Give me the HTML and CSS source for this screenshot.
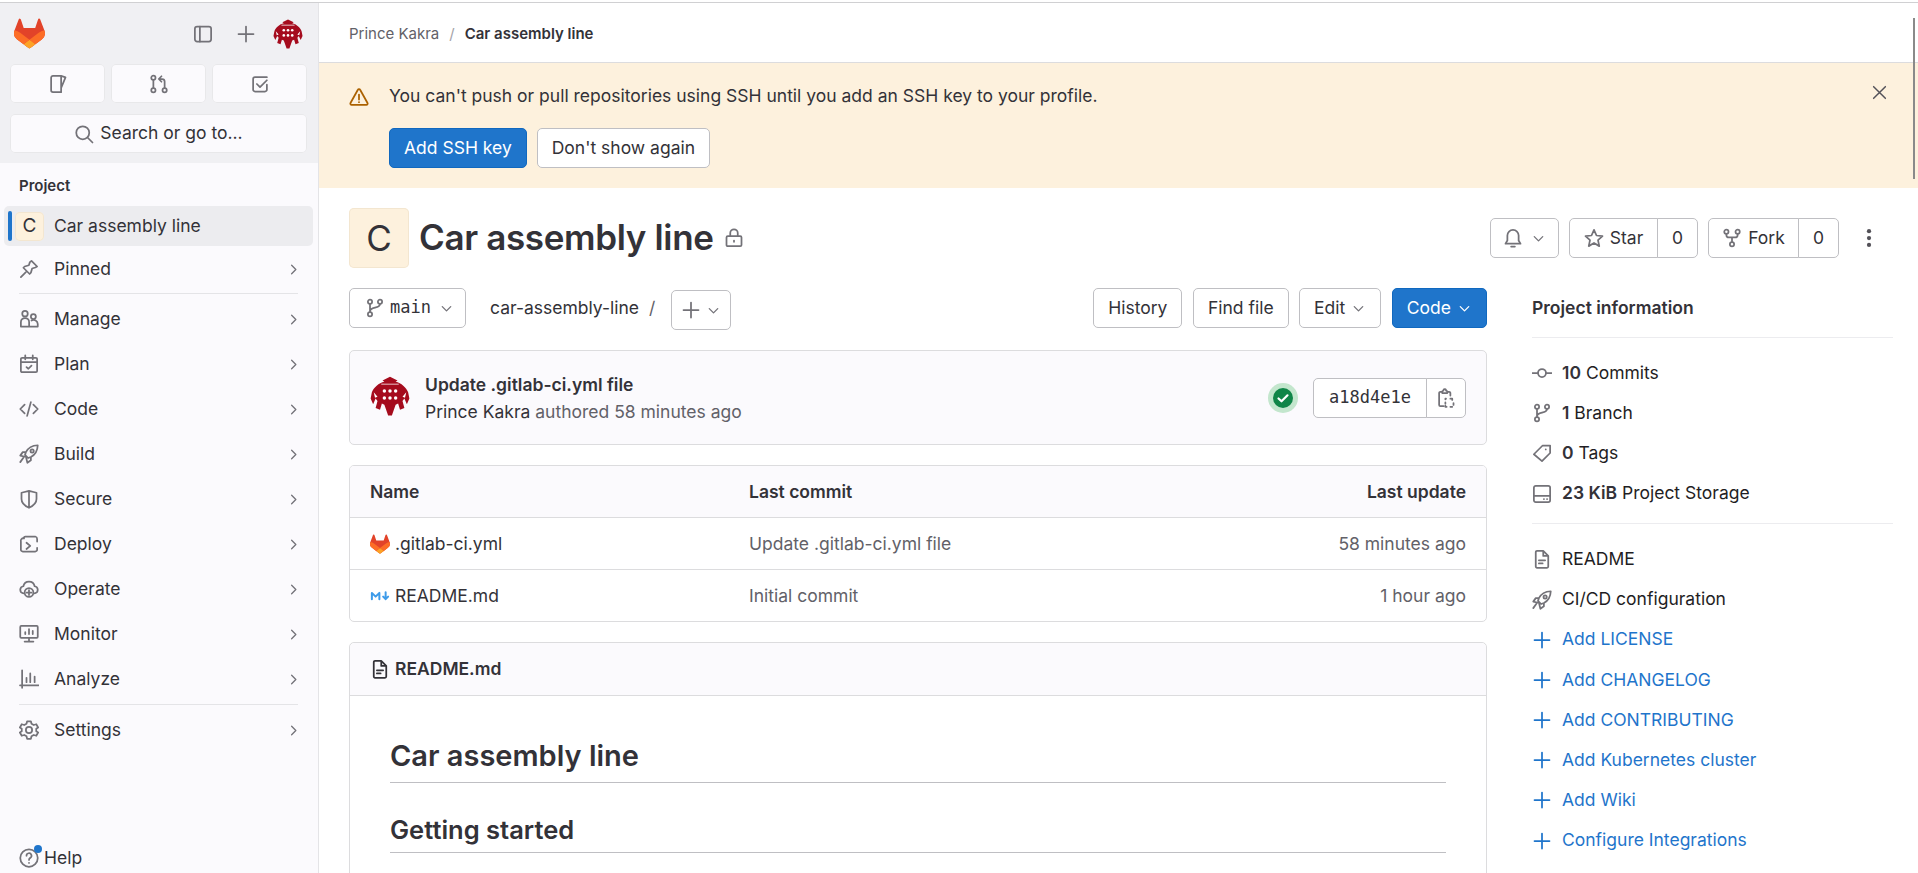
FILE: index.html
```html
<!DOCTYPE html>
<html lang="en">

<head>
    <meta charset="UTF-8">
    <meta name="viewport" content="width=device-width, initial-scale=1.0">
    <title>Car assembly line</title>
    <link rel="stylesheet" href="styles.css">
</head>

<body>
    <!-- icon sprite -->
    <svg class="sprite" xmlns="http://www.w3.org/2000/svg">
        <symbol id="i-tanuki" viewBox="0 0 25 24">
            <path fill="#E24329" stroke="none" d="m24.507 9.5-.034-.09L21.082.562a.896.896 0 0 0-1.694.091l-2.29 7.01H7.825L5.535.653a.898.898 0 0 0-1.694-.09L.451 9.411.416 9.5a6.297 6.297 0 0 0 2.09 7.278l.012.01.03.022 5.16 3.867 2.56 1.935 1.554 1.176a1.051 1.051 0 0 0 1.268 0l1.555-1.176 2.56-1.935 5.197-3.89.014-.01A6.297 6.297 0 0 0 24.507 9.5Z" />
            <path fill="#FC6D26" stroke="none" d="m24.507 9.5-.034-.09a11.44 11.44 0 0 0-4.56 2.051l-7.447 5.632 4.742 3.584 5.197-3.89.014-.01A6.297 6.297 0 0 0 24.507 9.5Z" />
            <path fill="#FCA326" stroke="none" d="m7.707 20.677 2.56 1.935 1.555 1.176a1.051 1.051 0 0 0 1.268 0l1.555-1.176 2.56-1.935-4.743-3.584-4.755 3.584Z" />
            <path fill="#FC6D26" stroke="none" d="M5.01 11.461a11.43 11.43 0 0 0-4.56-2.05L.416 9.5a6.297 6.297 0 0 0 2.09 7.278l.012.01.03.022 5.16 3.867 4.745-3.584-7.444-5.632Z" />
        </symbol>
        <symbol id="i-spider" viewBox="0 0 32 32">
            <path fill="#a50b1d" stroke="none" d="M16 .5 22 3.500 20.500 4.500C25 5.500 29 9 30.500 13L31.500 18 29.500 22.500 27.500 18 26 20 27.500 25.500 24 27 22.500 22 20.500 23 17.500 31.500H14.500L11.500 23 9.500 22 8 27 4.500 25.500 6 20 4.500 18 2.500 22.500.5 18 1.500 13C3 9 7 5.500 11.500 4.500L10 3.500Z" />
            <g fill="#fff" stroke="none">
                <circle cx="11.500" cy="12" r="1.400" />
                <circle cx="20.500" cy="12" r="1.400" />
                <circle cx="16" cy="12" r="1.400" />
                <circle cx="11.500" cy="17.500" r="1.400" />
                <circle cx="20.500" cy="17.500" r="1.400" />
                <circle cx="16" cy="17.500" r="1.400" />
                <path d="M9 6.200h14v.6H9zM3 13l3 3.500-2 .8zM29 13l-3 3.500 2 .8z" />
            </g>
        </symbol>
        <symbol id="i-sidebar" viewBox="0 0 16 16"><rect x="1.500" y="2" width="13" height="12" rx="1.800" /><path d="M5.500 2v12" /></symbol>
        <symbol id="i-plus" viewBox="0 0 16 16"><path d="M8 2v12M2 8h12" /></symbol>
        <symbol id="i-issues" viewBox="0 0 16 16"><path d="M2.500 3a1.500 1.500 0 0 1 1.500-1.500h6.500v13H4a1.500 1.500 0 0 1-1.500-1.500zM10.500 1.500l3.500 1.200-3.500 8.500" /></symbol>
        <symbol id="i-mr" viewBox="0 0 16 16"><circle cx="3.500" cy="3" r="1.700" /><circle cx="3.500" cy="13" r="1.700" /><circle cx="12.500" cy="13" r="1.700" /><path d="M3.500 4.700v6.600M12.500 11.300V6a2 2 0 0 0-2-2H8M10 1.800 7.800 4 10 6.200" /></symbol>
        <symbol id="i-todo" viewBox="0 0 16 16"><path d="M13.500 8.500v4a1.500 1.500 0 0 1-1.500 1.500H4a1.500 1.500 0 0 1-1.500-1.500v-8.500A1.500 1.500 0 0 1 4 2.500h9.500M5.500 8l2.500 2.500 5.500-5.500" /></symbol>
        <symbol id="i-search" viewBox="0 0 16 16"><circle cx="7" cy="7" r="5.200" /><path d="m11 11 3.800 3.800" /></symbol>
        <symbol id="i-pin" viewBox="0 0 16 16"><path d="M10 1.500 14.500 6 13 6.800l-2.500.8-1 3.400-1 1-5-5 1-1 3.400-1 .8-2.500zM5.500 10.500 1.500 14.500" /></symbol>
        <symbol id="i-users" viewBox="0 0 16 16"><circle cx="4.800" cy="3.700" r="2.200" /><circle cx="11.500" cy="6" r="2" /><path d="M1.500 14v-3.500a3.300 3.300 0 0 1 6.600 0V14zM8.200 14H15v-2a3.300 3.300 0 0 0-5-2.800" /></symbol>
        <symbol id="i-plan" viewBox="0 0 16 16"><rect x="1.500" y="3" width="13" height="11.500" rx="1" /><path d="M1.500 6.500h13M5 1v3.200M11 1v3.200M6 10.500l1.500 1.300 2.500-2.500" /></symbol>
        <symbol id="i-code" viewBox="0 0 16 16"><path d="M4.500 4.500 1 8l3.500 3.500M11.500 4.500 15 8l-3.500 3.500M9.500 2.500l-3 11" /></symbol>
        <symbol id="i-rocket" viewBox="0 0 16 16"><path d="M15 1c-4.500.2-7.500 1.700-9.500 5.500L4.800 8.700l2.500 2.500 2.200-.8C13.300 8.500 14.800 5.500 15 1zM5.500 6.500H3L1 9.300l3.800.9M9.500 10.500V13l-2.800 2-.9-3.800M3.500 11 1 14.500" /><circle cx="10.500" cy="5.500" r="1.300" /></symbol>
        <symbol id="i-shield" viewBox="0 0 16 16"><path d="M2 3l6-1.500L14 3v5c0 3-2.500 5.500-6 7-3.500-1.500-6-4-6-7zM8 1.500V15" /></symbol>
        <symbol id="i-deploy" viewBox="0 0 16 16"><path d="M4 3.500V3a1 1 0 0 1 1-1h8a2 2 0 0 1 1.500 2v2M1.500 6v6.500a1.500 1.500 0 0 0 1.500 1.500h10a1.500 1.500 0 0 0 1.500-1.500V11M1.500 6a2 2 0 0 1 2.500-2.500M6 7l3 2.500L6 12" /></symbol>
        <symbol id="i-operate" viewBox="0 0 16 16"><path d="M3.500 11.500a3 3 0 0 1-2.500-3 3 3 0 0 1 2.500-2.700 4.600 4.600 0 0 1 9 0A3 3 0 0 1 15 8.500a3 3 0 0 1-2.500 3" /><circle cx="8" cy="10.800" r="3.500" /><path d="M8 8.800v4M6 10.800h4" /></symbol>
        <symbol id="i-monitor" viewBox="0 0 16 16"><rect x="1" y="1.500" width="14" height="9.500" rx=".8" /><path d="M4.500 14h7M8 11v3M5 8V6.500M8 8V4M11 8V5.500" /></symbol>
        <symbol id="i-analyze" viewBox="0 0 16 16"><path d="M2.500 1v14M.8 13h14.700M6 10.500V7M9 10.500V3.500M12.500 10.500V6" /></symbol>
        <symbol id="i-gear" viewBox="0 0 16 16"><path d="M6.500 1h3l.5 2 1.800 1 2-.6 1.500 2.600-1.500 1v2l1.500 1-1.500 2.600-2-.6-1.800 1-.5 2h-3l-.5-2-1.800-1-2 .6L.7 10l1.500-1V7L.7 6l1.500-2.600 2 .6 1.800-1z" /><circle cx="8" cy="8" r="2.500" /></symbol>
        <symbol id="i-help" viewBox="0 0 16 16"><circle cx="8" cy="8" r="7" /><path d="M6 6.200a2 2 0 1 1 3 1.700c-.7.400-1 .9-1 1.600M8 11.800v.1" /></symbol>
        <symbol id="i-right" viewBox="0 0 16 16"><path d="M6 3.500 10.500 8 6 12.500" /></symbol>
        <symbol id="i-down" viewBox="0 0 16 16"><path d="M3.500 6 8 10.500 12.500 6" /></symbol>
        <symbol id="i-warning" viewBox="0 0 16 16"><path d="M7.100 2.200a1 1 0 0 1 1.800 0l5.900 10.600a1 1 0 0 1-.9 1.500H2.100a1 1 0 0 1-.9-1.500zM8 6v4M8 12v.1" /></symbol>
        <symbol id="i-close" viewBox="0 0 16 16"><path d="m2.500 2.500 11 11M13.500 2.500l-11 11" /></symbol>
        <symbol id="i-lock" viewBox="0 0 16 16"><rect x="2" y="6.500" width="12" height="8" rx="1" /><path d="M5 6.500V4a3 3 0 0 1 6 0v2.500M8 10v1" /></symbol>
        <symbol id="i-branch" viewBox="0 0 16 16"><circle cx="4" cy="3" r="1.700" /><circle cx="4" cy="13" r="1.700" /><circle cx="12" cy="3" r="1.700" /><path d="M4 4.700v6.600M12 4.700c0 4-8 2-8 6" /></symbol>
        <symbol id="i-bell" viewBox="0 0 16 16"><path d="M8 1.500A4.500 4.500 0 0 0 3.500 6v4L2 12.500h12L12.500 10V6A4.500 4.500 0 0 0 8 1.500zM6.500 14.800h3" /></symbol>
        <symbol id="i-star" viewBox="0 0 16 16"><path d="M8 1.500 10 6l4.800.5-3.600 3.200 1 4.800L8 12l-4.200 2.500 1-4.800L1.200 6.500 6 6z" /></symbol>
        <symbol id="i-fork" viewBox="0 0 16 16"><circle cx="3.500" cy="3" r="1.700" /><circle cx="12.500" cy="3" r="1.700" /><circle cx="8" cy="13" r="1.700" /><path d="M3.500 4.700v.8a2 2 0 0 0 2 2h5a2 2 0 0 0 2-2v-.8M8 7.500v3.800" /></symbol>
        <symbol id="i-kebab" viewBox="0 0 16 16"><g fill="currentColor" stroke="none"><circle cx="8" cy="2.500" r="1.700" /><circle cx="8" cy="8" r="1.700" /><circle cx="8" cy="13.500" r="1.700" /></g></symbol>
        <symbol id="i-copy" viewBox="0 0 16 16"><path d="M5 3H3.500A1 1 0 0 0 2.500 4v9.500a1 1 0 0 0 1 1H6M11.500 6V4a1 1 0 0 0-1-1H9M5 3a1 1 0 0 1 1-1V1.500a1 1 0 0 1 1-.5 1 1 0 0 1 1 .5V2a1 1 0 0 1 1 1v1H5zM8 8.500H7.500v.5M11.500 8.500h1.500v1M14 12v1.500M13 15h-1.500M8.500 15h-1v-1M7.500 11.500v1" /></symbol>
        <symbol id="i-commit" viewBox="0 0 16 16"><circle cx="8" cy="8" r="3.200" /><path d="M.5 8h4.300M11.200 8h4.300" /></symbol>
        <symbol id="i-tag" viewBox="0 0 16 16"><path d="M14.500 2v6L8 14.500 1.500 9 8.500 2zM11 5v.1" /></symbol>
        <symbol id="i-storage" viewBox="0 0 16 16"><rect x="1.500" y="1.500" width="13" height="13" rx="1.500" /><path d="M1.500 9.500h13M9.500 12h.1M12 12h.1" /></symbol>
        <symbol id="i-doc" viewBox="0 0 16 16"><path d="M3 2.500a1 1 0 0 1 1-1h5l4 4v8.500a1 1 0 0 1-1 1H4a1 1 0 0 1-1-1zM9 1.500v4h4M5.500 9h5M5.500 11.500h3" /></symbol>
        <symbol id="i-md" viewBox="0 0 16 16"><path stroke="#3d9be9" stroke-width="1.600" d="M1.500 10.500V5.500L4.500 8.500l3-3V10.500M12.500 5v5.500M10.500 8.500l2 2 2-2" /></symbol>
    </svg>

    <div class="topline"></div>
    <div class="thumb"></div>

    <div class="layout">
        <aside class="sidebar">
            <div class="side-top">
                <div class="side-head">
                    <svg class="logo"><use href="#i-tanuki" /></svg>
                    <div class="side-tools">
                        <svg class="ic ic-20"><use href="#i-sidebar" /></svg>
                        <svg class="ic ic-20"><use href="#i-plus" /></svg>
                        <svg class="avatar-sm"><use href="#i-spider" /></svg>
                    </div>
                </div>
                <div class="side-counts">
                    <a class="count-btn"><svg class="ic ic-20"><use href="#i-issues" /></svg></a>
                    <a class="count-btn"><svg class="ic ic-20"><use href="#i-mr" /></svg></a>
                    <a class="count-btn"><svg class="ic ic-20"><use href="#i-todo" /></svg></a>
                </div>
                <a class="search-btn"><svg class="ic ic-20"><use href="#i-search" /></svg>Search or go to...</a>
            </div>

            <div class="side-nav">
                <div class="side-label">Project</div>
                <a class="nav-item active"><span class="tile">C</span>Car assembly line</a>
                <a class="nav-item pinned"><svg class="ic ic-20"><use href="#i-pin" /></svg>Pinned<svg class="ic chev"><use href="#i-right" /></svg></a>
                <hr class="side-rule">
                <div class="nav-group">
                    <a class="nav-item"><svg class="ic ic-20"><use href="#i-users" /></svg>Manage<svg class="ic chev"><use href="#i-right" /></svg></a>
                    <a class="nav-item"><svg class="ic ic-20"><use href="#i-plan" /></svg>Plan<svg class="ic chev"><use href="#i-right" /></svg></a>
                    <a class="nav-item"><svg class="ic ic-20"><use href="#i-code" /></svg>Code<svg class="ic chev"><use href="#i-right" /></svg></a>
                    <a class="nav-item"><svg class="ic ic-20"><use href="#i-rocket" /></svg>Build<svg class="ic chev"><use href="#i-right" /></svg></a>
                    <a class="nav-item"><svg class="ic ic-20"><use href="#i-shield" /></svg>Secure<svg class="ic chev"><use href="#i-right" /></svg></a>
                    <a class="nav-item"><svg class="ic ic-20"><use href="#i-deploy" /></svg>Deploy<svg class="ic chev"><use href="#i-right" /></svg></a>
                    <a class="nav-item"><svg class="ic ic-20"><use href="#i-operate" /></svg>Operate<svg class="ic chev"><use href="#i-right" /></svg></a>
                    <a class="nav-item"><svg class="ic ic-20"><use href="#i-monitor" /></svg>Monitor<svg class="ic chev"><use href="#i-right" /></svg></a>
                    <a class="nav-item"><svg class="ic ic-20"><use href="#i-analyze" /></svg>Analyze<svg class="ic chev"><use href="#i-right" /></svg></a>
                </div>
                <hr class="side-rule settings-rule">
                <a class="nav-item"><svg class="ic ic-20"><use href="#i-gear" /></svg>Settings<svg class="ic chev"><use href="#i-right" /></svg></a>
                <a class="help"><span class="help-icon"><svg class="ic ic-20"><use href="#i-help" /></svg><i class="help-dot"></i></span>Help</a>
            </div>
        </aside>

        <main class="main">
            <nav class="crumbs">
                <a>Prince Kakra</a><span class="crumb-sep">/</span><b>Car assembly line</b>
            </nav>

            <section class="banner">
                <svg class="ic banner-icon"><use href="#i-warning" /></svg>
                <div class="banner-body">
                    <p>You can't push or pull repositories using SSH until you add an SSH key to your profile.</p>
                    <div class="banner-actions">
                        <button class="btn btn-primary">Add SSH key</button>
                        <button class="btn">Don't show again</button>
                    </div>
                </div>
                <svg class="ic banner-close"><use href="#i-close" /></svg>
            </section>

            <div class="content">
                <header class="project-head">
                    <div class="project-title">
                        <span class="project-tile">C</span>
                        <h1>Car assembly line</h1>
                        <svg class="ic lock"><use href="#i-lock" /></svg>
                    </div>
                    <div class="project-actions">
                        <button class="btn btn-bell"><svg class="ic ic-20"><use href="#i-bell" /></svg><svg class="ic ic-sm"><use href="#i-down" /></svg></button>
                        <div class="btn-group star-group">
                            <button class="btn"><svg class="ic ic-20"><use href="#i-star" /></svg>Star</button>
                            <button class="btn btn-count">0</button>
                        </div>
                        <div class="btn-group fork-group">
                            <button class="btn"><svg class="ic ic-20"><use href="#i-fork" /></svg>Fork</button>
                            <button class="btn btn-count">0</button>
                        </div>
                        <span class="kebab"><svg class="ic ic-20"><use href="#i-kebab" /></svg></span>
                    </div>
                </header>

                <div class="columns">
                    <div class="col-main">
                        <div class="tree-bar">
                            <button class="btn btn-branch"><svg class="ic ic-20"><use href="#i-branch" /></svg><span class="mono">main</span><svg class="ic ic-sm"><use href="#i-down" /></svg></button>
                            <span class="tree-path">car-assembly-line</span>
                            <span class="tree-sep">/</span>
                            <button class="btn btn-add"><svg class="ic ic-20"><use href="#i-plus" /></svg><svg class="ic ic-sm"><use href="#i-down" /></svg></button>
                            <div class="tree-actions">
                                <button class="btn">History</button>
                                <button class="btn">Find file</button>
                                <button class="btn">Edit<svg class="ic ic-sm"><use href="#i-down" /></svg></button>
                                <button class="btn btn-primary">Code<svg class="ic ic-sm"><use href="#i-down" /></svg></button>
                            </div>
                        </div>

                        <div class="commit-box">
                            <svg class="avatar-md"><use href="#i-spider" /></svg>
                            <div class="commit-text">
                                <a class="commit-title">Update .gitlab-ci.yml file</a>
                                <div class="commit-meta"><a>Prince Kakra</a> authored 58 minutes ago</div>
                            </div>
                            <span class="status">
                                <svg viewBox="0 0 20 20" class="status-icon"><circle cx="10" cy="10" r="10" fill="#108548" /><path d="m5.500 10.500 3 2.800 6-6" fill="none" stroke="#fff" stroke-width="2.200" stroke-linecap="round" stroke-linejoin="round" /></svg>
                            </span>
                            <div class="btn-group sha-group">
                                <button class="btn mono">a18d4e1e</button>
                                <button class="btn btn-copy"><svg class="ic ic-20"><use href="#i-copy" /></svg></button>
                            </div>
                        </div>

                        <div class="file-box">
                            <table class="file-table">
                                <thead>
                                    <tr>
                                        <th class="col-name">Name</th>
                                        <th>Last commit</th>
                                        <th class="col-date">Last update</th>
                                    </tr>
                                </thead>
                                <tbody>
                                    <tr>
                                        <td class="col-name"><span class="file-name"><svg class="file-icon"><use href="#i-tanuki" /></svg>.gitlab-ci.yml</span></td>
                                        <td class="muted">Update .gitlab-ci.yml file</td>
                                        <td class="col-date muted">58 minutes ago</td>
                                    </tr>
                                    <tr>
                                        <td class="col-name"><span class="file-name"><svg class="ic file-icon"><use href="#i-md" /></svg>README.md</span></td>
                                        <td class="muted">Initial commit</td>
                                        <td class="col-date muted">1 hour ago</td>
                                    </tr>
                                </tbody>
                            </table>
                        </div>

                        <article class="readme">
                            <div class="readme-head"><svg class="ic ic-20"><use href="#i-doc" /></svg>README.md</div>
                            <div class="readme-body">
                                <h1>Car assembly line</h1>
                                <h2>Getting started</h2>
                            </div>
                        </article>
                    </div>

                    <aside class="col-info">
                        <h3>Project information</h3>
                        <ul class="info-list">
                            <li><svg class="ic ic-20"><use href="#i-commit" /></svg><span><b>10</b> Commits</span></li>
                            <li><svg class="ic ic-20"><use href="#i-branch" /></svg><span><b>1</b> Branch</span></li>
                            <li><svg class="ic ic-20"><use href="#i-tag" /></svg><span><b>0</b> Tags</span></li>
                            <li><svg class="ic ic-20"><use href="#i-storage" /></svg><span><b>23 KiB</b> Project Storage</span></li>
                        </ul>
                        <ul class="info-list second">
                            <li><svg class="ic ic-20"><use href="#i-doc" /></svg><span>README</span></li>
                            <li><svg class="ic ic-20"><use href="#i-rocket" /></svg><span>CI/CD configuration</span></li>
                            <li class="add"><svg class="ic ic-20"><use href="#i-plus" /></svg><span>Add LICENSE</span></li>
                            <li class="add"><svg class="ic ic-20"><use href="#i-plus" /></svg><span>Add CHANGELOG</span></li>
                            <li class="add"><svg class="ic ic-20"><use href="#i-plus" /></svg><span>Add CONTRIBUTING</span></li>
                            <li class="add"><svg class="ic ic-20"><use href="#i-plus" /></svg><span>Add Kubernetes cluster</span></li>
                            <li class="add"><svg class="ic ic-20"><use href="#i-plus" /></svg><span>Add Wiki</span></li>
                            <li class="add"><svg class="ic ic-20"><use href="#i-plus" /></svg><span>Configure Integrations</span></li>
                        </ul>
                    </aside>
                </div>
            </div>
        </main>
    </div>
</body>

</html>
```
FILE: styles.css
```css
:root {
    --text: #333238;
    --muted: #626168;
    --icon: #737278;
    --line: #dcdcde;
    --btn-line: #bfbfc3;
    --blue: #1f75cb;
    --panel: #fbfafd;
}

* {
    box-sizing: border-box;
}

html,
body {
    height: 873px;
    overflow: hidden;
}

body {
    margin: 0;
    background: #fff;
    color: var(--text);
    font-family: Inter, "Noto Sans", sans-serif;
    font-size: 17.5px;
    line-height: 1.4;
}

.sprite {
    display: none;
}

.topline {
    height: 3px;
    border-bottom: 1px solid #d0d0d2;
}

.thumb {
    position: absolute;
    top: 18px;
    left: 1913px;
    width: 2px;
    height: 161px;
    background: #8a8a8a;
}

.layout {
    display: flex;
    height: 870px;
}

/* icons */
.ic {
    fill: none;
    stroke: currentColor;
    stroke-width: 1.4;
    stroke-linecap: round;
    stroke-linejoin: round;
    color: var(--icon);
    flex: none;
}

.ic-20 {
    width: 20px;
    height: 20px;
}

.ic-sm {
    width: 15px;
    height: 15px;
}

/* sidebar */
.sidebar {
    width: 319px;
    flex: none;
    display: flex;
    flex-direction: column;
    border-right: 1px solid #e4e4e7;
    background: var(--panel);
}

.side-top {
    height: 160px;
    padding: 15px 11px 0 10px;
    background: #f0f0f3;
}

.side-head {
    display: flex;
    align-items: center;
    justify-content: space-between;
    height: 31px;
    padding-left: 4px;
}

.logo {
    width: 31px;
    height: 31px;
}

.side-tools {
    display: flex;
    align-items: center;
    gap: 23px;
    padding-right: 4px;
}

.avatar-sm {
    width: 30px;
    height: 30px;
    margin-left: -6px;
}

.side-counts {
    display: flex;
    gap: 6px;
    margin-top: 15px;
}

.count-btn {
    flex: 1;
    height: 39px;
    display: flex;
    align-items: center;
    justify-content: center;
    border-radius: 5px;
    background: var(--panel);
    box-shadow: 0 0 0 1px #e8e8ea inset;
}

.search-btn {
    height: 39px;
    margin-top: 11px;
    display: flex;
    align-items: center;
    justify-content: center;
    gap: 6px;
    border-radius: 5px;
    background: var(--panel);
    box-shadow: 0 0 0 1px #e8e8ea inset;
}

.side-nav {
    flex: 1;
    display: flex;
    flex-direction: column;
    padding: 0 5px 0 4px;
}

.side-label {
    height: 43px;
    padding: 12px 0 0 15px;
    font-size: 15px;
    font-weight: 600;
}

.nav-item {
    height: 40px;
    display: flex;
    align-items: center;
    gap: 15px;
    padding-left: 15px;
    padding-right: 12px;
    border-radius: 5px;
}

.nav-item .chev {
    margin-left: auto;
    width: 15px;
    height: 15px;
}

.nav-item.active {
    position: relative;
    background: #ececef;
    padding-left: 11px;
    gap: 10px;
}

.nav-item.active::before {
    content: "";
    position: absolute;
    left: 4px;
    top: 5px;
    bottom: 5px;
    width: 4px;
    border-radius: 2px;
    background: var(--blue);
}

.nav-item.pinned {
    margin-top: 3px;
}

.tile {
    width: 29px;
    height: 29px;
    display: flex;
    align-items: center;
    justify-content: center;
    border-radius: 5px;
    background: #fdf1dd;
    box-shadow: 0 0 0 1px #f3e6d0 inset;
    font-size: 19px;
}

.side-rule {
    width: 279px;
    margin: 4px 0 5px 15px;
    border: 0;
    border-top: 1px solid #e4e4e7;
}

.settings-rule {
    margin-top: 5px;
}

.nav-group {
    display: flex;
    flex-direction: column;
    gap: 5px;
}

.help {
    margin-top: auto;
    margin-bottom: 3px;
    padding-left: 15px;
    display: flex;
    align-items: center;
    gap: 5px;
}

.help-icon {
    position: relative;
    display: flex;
}

.help-dot {
    position: absolute;
    top: -3px;
    right: -3px;
    width: 8px;
    height: 8px;
    border-radius: 50%;
    background: var(--blue);
}

/* main */
.main {
    flex: 1;
    min-width: 0;
}

.crumbs {
    height: 60px;
    display: flex;
    align-items: center;
    padding: 1px 0 0 30px;
    border-bottom: 1px solid var(--line);
    font-size: 15px;
    color: var(--muted);
}

.crumbs b {
    font-weight: 600;
    color: var(--text);
}

.crumb-sep {
    margin: 0 10px;
    color: #a4a3a8;
}

.banner {
    height: 125px;
    display: flex;
    padding: 23px 30px;
    background: #fdf1dd;
}

.banner-icon {
    width: 20px;
    height: 20px;
    margin-top: 1px;
    color: #ab6100;
}

.banner-body {
    margin-left: 20px;
    flex: 1;
}

.banner-body p {
    margin: 0;
    line-height: 19px;
}

.banner-actions {
    display: flex;
    gap: 10px;
    margin-top: 23px;
}

.banner-close {
    width: 17px;
    height: 17px;
    margin-top: -2px;
    color: #535158;
}

.btn {
    height: 40px;
    display: inline-flex;
    align-items: center;
    justify-content: center;
    gap: 6px;
    padding: 0 14px;
    border: 1px solid var(--btn-line);
    border-radius: 5px;
    background: #fff;
    color: var(--text);
    font: inherit;
    white-space: nowrap;
}

.btn-primary {
    border-color: #1068bf;
    background: var(--blue);
    color: #fff;
}

.btn-primary .ic {
    color: #fff;
}

.mono {
    font-family: "DejaVu Sans Mono", "Liberation Mono", monospace;
    font-size: 17px;
}

.content {
    padding: 20px 25px 0 30px;
}

.project-head {
    display: flex;
    align-items: center;
    justify-content: space-between;
    height: 60px;
}

.project-title {
    display: flex;
    align-items: center;
}

.project-tile {
    width: 60px;
    height: 60px;
    display: flex;
    align-items: center;
    justify-content: center;
    border-radius: 5px;
    background: #fdf1dd;
    box-shadow: 0 0 0 1px #f3e6d0 inset;
    font-size: 35px;
}

.project-title h1 {
    margin: 0 0 0 10px;
    font-size: 35px;
    font-weight: 600;
    letter-spacing: -0.01em;
    line-height: 1.25;
}

.lock {
    width: 20px;
    height: 20px;
    margin-left: 10px;
}

.project-actions {
    display: flex;
    align-items: center;
    gap: 10px;
}

.btn-bell {
    width: 69px;
    padding: 0;
    gap: 8px;
}

.btn-group {
    display: flex;
}

.btn-group .btn:first-child {
    border-radius: 5px 0 0 5px;
}

.btn-group .btn:last-child {
    margin-left: -1px;
    border-radius: 0 5px 5px 0;
}

.btn-count {
    width: 41px;
    padding: 0;
}

.star-group .btn:first-child {
    width: 89px;
    padding: 0;
}

.fork-group .btn:first-child {
    width: 91px;
    padding: 0;
}

.kebab {
    width: 38px;
    display: flex;
    justify-content: center;
    margin-right: 5px;
    margin-left: 1px;
}

.kebab .ic {
    color: #535158;
}

.columns {
    display: grid;
    grid-template-columns: 1138px 361px;
    gap: 45px;
    padding-top: 20px;
}

.tree-bar {
    display: flex;
    align-items: flex-start;
    height: 40px;
}

.btn-branch {
    width: 117px;
    padding: 0 0 0 15px;
    gap: 5px;
    justify-content: flex-start;
}

.btn-branch .ic-sm {
    margin-left: 3px;
}

.tree-path {
    margin-left: 24px;
    line-height: 40px;
}

.tree-sep {
    margin-left: 10px;
    line-height: 40px;
    color: var(--muted);
}

.btn-add {
    width: 60px;
    margin: 2px 0 0 16px;
    padding: 0;
    gap: 5px;
}

.tree-actions {
    margin-left: auto;
    display: flex;
    gap: 10.5px;
}

.commit-box {
    height: 95px;
    margin-top: 22px;
    display: flex;
    align-items: center;
    padding: 0 20px;
    border: 1px solid var(--line);
    border-radius: 5px;
    background: var(--panel);
}

.avatar-md {
    width: 40px;
    height: 40px;
    margin-top: -4px;
}

.commit-text {
    margin-left: 15px;
    flex: 1;
    margin-top: 4px;
}

.commit-title {
    display: block;
    font-weight: 600;
    line-height: 24px;
}

.commit-meta {
    line-height: 28px;
    margin-top: 1px;
    color: var(--muted);
}

.commit-meta a {
    color: var(--text);
}

.status {
    width: 30px;
    height: 30px;
    display: flex;
    align-items: center;
    justify-content: center;
    border-radius: 50%;
    background: #c3e6cd;
}

.status-icon {
    width: 20px;
    height: 20px;
}

.sha-group {
    margin-left: 15px;
}

.btn-copy {
    width: 40px;
    padding: 0;
}

.sha-group .mono {
    width: 114px;
    padding: 0;
}

.file-box {
    margin-top: 20px;
    border: 1px solid var(--line);
    border-radius: 5px;
    overflow: hidden;
}

.file-table {
    width: 100%;
    border-collapse: collapse;
}

.file-table th,
.file-table td {
    height: 52px;
    padding: 2px 20px 0;
    text-align: left;
}

.file-table th {
    height: 51px;
    background: var(--panel);
    font-weight: 600;
}

.file-table tr + tr td,
.file-table tbody tr:first-child td {
    border-top: 1px solid var(--line);
}

.file-table .col-name {
    width: 379px;
    padding-right: 0;
}

.file-table .col-date {
    text-align: right;
}

.muted {
    color: var(--muted);
}

.file-name {
    display: flex;
    align-items: center;
    gap: 5px;
}

.file-icon {
    width: 20px;
    height: 20px;
    flex: none;
}

.readme {
    margin-top: 20px;
    border: 1px solid var(--line);
    border-radius: 5px 5px 0 0;
}

.readme-head {
    height: 53px;
    display: flex;
    align-items: center;
    gap: 5px;
    padding-left: 20px;
    background: var(--panel);
    border-bottom: 1px solid var(--line);
    border-radius: 5px 5px 0 0;
    font-weight: 600;
}

.readme-head .ic {
    color: var(--text);
}

.readme-body {
    padding: 42px 40px 60px;
}

.readme-body h1,
.readme-body h2 {
    margin: 0;
    padding-bottom: 8px;
    border-bottom: 1px solid #bfbfc3;
    font-weight: 600;
    line-height: 1.25;
}

.readme-body h1 {
    font-size: 29px;
}

.readme-body h2 {
    margin-top: 31px;
    padding-bottom: 6px;
    font-size: 25.5px;
}

/* right column */
.col-info h3 {
    height: 50px;
    margin: 0;
    border-bottom: 1px solid #ececef;
    font-size: 17.5px;
    font-weight: 600;
    line-height: 39px;
}

.info-list {
    margin: 0;
    padding: 15px 0 9px;
    list-style: none;
    color: #1f1e24;
}

.info-list.second {
    padding-top: 15.5px;
    border-top: 1px solid #ececef;
}

.info-list li {
    height: 40.2px;
    display: flex;
    align-items: center;
    gap: 10px;
}

.info-list b {
    font-weight: 600;
    color: var(--text);
}

.info-list .add,
.info-list .add .ic {
    color: var(--blue);
}
```
